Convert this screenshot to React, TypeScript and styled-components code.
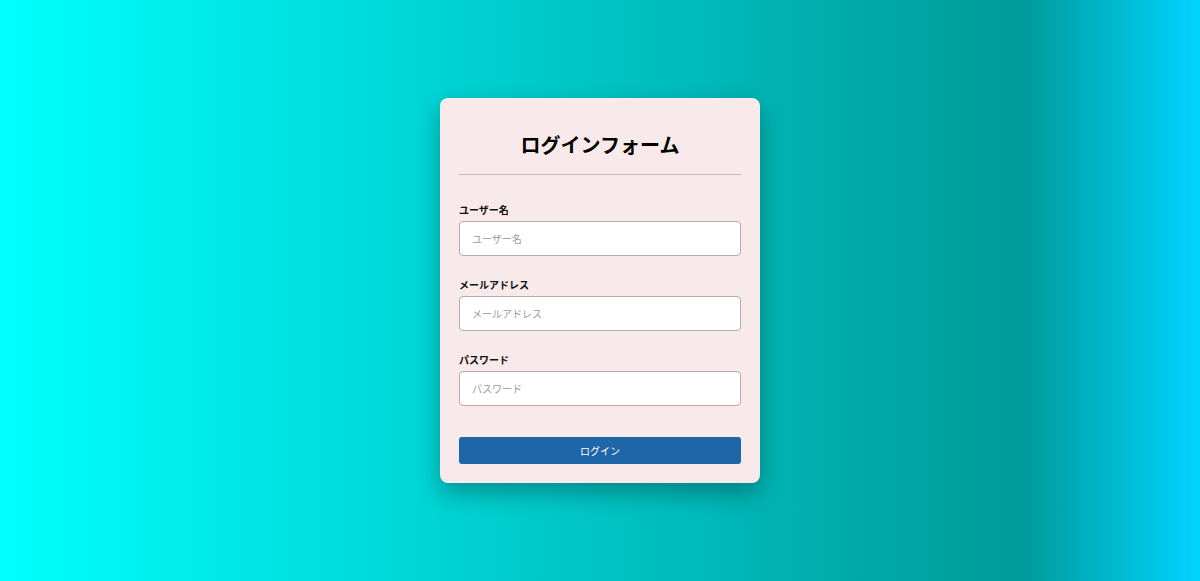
import React from "react";
import styled, { createGlobalStyle } from "styled-components";

const GlobalStyle = createGlobalStyle`
  html, body {
    margin: 0;
    padding: 0;
    height: 100%;
  }
  body {
    font-family: "Noto Sans CJK JP", "Noto Sans", sans-serif;
  }
  #root {
    height: 100%;
  }
`;

const Page = styled.div`
  width: 100%;
  height: 581px;
  display: flex;
  align-items: center;
  justify-content: center;
  background: linear-gradient(to right, #00ffff 0%, #009a9a 85%, #00d4ff 100%);
`;

const Card = styled.form`
  width: 320px;
  box-sizing: border-box;
  padding: 20px 19px 19px 19px;
  background-color: #f8eaea;
  border-radius: 8px;
  box-shadow: 0 10px 25px rgba(0, 0, 0, 0.3);
  display: flex;
  flex-direction: column;
`;

const Title = styled.h2`
  margin: 12px 0 0 0;
  font-size: 20px;
  line-height: 30px;
  font-weight: bold;
  text-align: center;
  color: #000;
`;

const Divider = styled.hr`
  width: 100%;
  margin: 14px 0 28px 0;
  border: none;
  border-top: 1px solid #bbb;
`;

const Field = styled.div`
  display: flex;
  flex-direction: column;
  gap: 4px;
  margin-bottom: 22px;
`;

const Label = styled.label`
  font-size: 10px;
  line-height: 14px;
  font-weight: bold;
  color: #111;
`;

const Input = styled.input`
  height: 35px;
  box-sizing: border-box;
  padding: 0 12px;
  border: 1px solid #b5aaaa;
  border-radius: 4px;
  background: #fff;
  font-family: inherit;
  font-size: 10px;
  outline: none;

  &::placeholder {
    color: #999;
  }
`;

const Button = styled.button`
  margin-top: 9px;
  height: 27px;
  border: none;
  border-radius: 3px;
  background-color: #1e66a8;
  color: #fff;
  font-family: inherit;
  font-size: 10px;
  cursor: pointer;
`;

const fields = [
  { id: "username", label: "ユーザー名", type: "text" },
  { id: "email", label: "メールアドレス", type: "email" },
  { id: "password", label: "パスワード", type: "password" },
];

const App = () => {
  return (
    <>
      <GlobalStyle />
      <Page>
        <Card onSubmit={(e) => e.preventDefault()}>
          <Title>ログインフォーム</Title>
          <Divider />
          {fields.map((f) => (
            <Field key={f.id}>
              <Label htmlFor={f.id}>{f.label}</Label>
              <Input id={f.id} type={f.type} placeholder={f.label} />
            </Field>
          ))}
          <Button type="submit">ログイン</Button>
        </Card>
      </Page>
    </>
  );
};

export default App;
